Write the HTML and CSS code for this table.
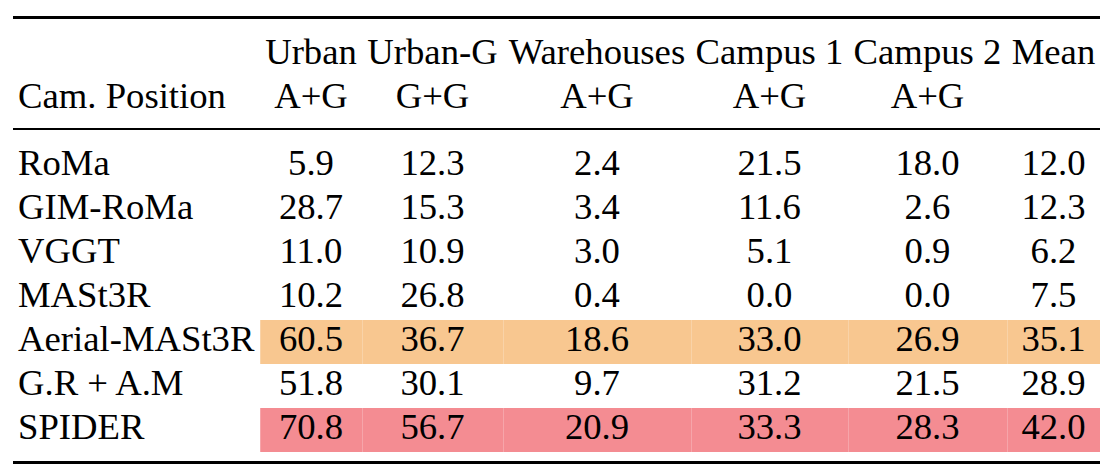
FILE: index.html
```html
<!DOCTYPE html>
<html lang="en">
<head>
<meta charset="utf-8">
<title>Results</title>
<link rel="stylesheet" href="styles.css">
</head>
<body>
<div class="frame">
  <table class="results">
    <colgroup>
      <col class="c0"><col class="c1"><col class="c2"><col class="c3"><col class="c4"><col class="c5"><col class="c6">
    </colgroup>
    <thead>
      <tr class="h1">
        <th class="name"></th><th>Urban</th><th>Urban-G</th><th>Warehouses</th><th>Campus 1</th><th>Campus 2</th><th>Mean</th>
      </tr>
      <tr class="h2">
        <th class="name">Cam. Position</th><th>A+G</th><th>G+G</th><th>A+G</th><th>A+G</th><th>A+G</th><th></th>
      </tr>
    </thead>
    <tbody>
      <tr class="first"><td class="name">RoMa</td><td>5.9</td><td>12.3</td><td>2.4</td><td>21.5</td><td>18.0</td><td>12.0</td></tr>
      <tr><td class="name">GIM-RoMa</td><td>28.7</td><td>15.3</td><td>3.4</td><td>11.6</td><td>2.6</td><td>12.3</td></tr>
      <tr><td class="name">VGGT</td><td>11.0</td><td>10.9</td><td>3.0</td><td>5.1</td><td>0.9</td><td>6.2</td></tr>
      <tr><td class="name">MASt3R</td><td>10.2</td><td>26.8</td><td>0.4</td><td>0.0</td><td>0.0</td><td>7.5</td></tr>
      <tr class="hl-orange"><td class="name">Aerial-MASt3R</td><td>60.5</td><td>36.7</td><td>18.6</td><td>33.0</td><td>26.9</td><td>35.1</td></tr>
      <tr><td class="name">G.R + A.M</td><td>51.8</td><td>30.1</td><td>9.7</td><td>31.2</td><td>21.5</td><td>28.9</td></tr>
      <tr class="hl-red"><td class="name">SPIDER</td><td>70.8</td><td>56.7</td><td>20.9</td><td>33.3</td><td>28.3</td><td>42.0</td></tr>
    </tbody>
  </table>
</div>
</body>
</html>
```
FILE: styles.css
```css
html, body {
  margin: 0;
  padding: 0;
  background: #ffffff;
}

.frame {
  margin: 16px 0 0 13px;
  width: 1087px;
  border-top: 3px solid #000;
  border-bottom: 3px solid #000;
  padding: 14px 0 9px 0;
}

.results {
  width: 1087px;
  table-layout: fixed;
  border-collapse: separate;
  border-spacing: 0;
  font-family: "Liberation Serif", "Times New Roman", serif;
  font-size: 36.7px;
  color: #000;
}

.c0 { width: 247px; }
.c1 { width: 102px; }
.c2 { width: 141px; }
.c3 { width: 188px; }
.c4 { width: 157px; }
.c5 { width: 159px; }
.c6 { width: 93px; }

.results th,
.results td {
  font-weight: normal;
  text-align: center;
  white-space: nowrap;
  line-height: 37.2px;
  padding: 0 0 6.8px 0;
  height: 37.2px;
  vertical-align: top;
}

.results .name {
  text-align: left;
  padding-left: 5px;
}

.results .h2 th {
  padding-bottom: 13.8px;
  border-bottom: 2px solid #000;
}

.results .first td {
  padding-top: 14px;
}

.hl-orange td:not(.name) {
  background: #f8c790;
  box-shadow: inset 1px 0 0 rgba(255, 255, 255, 0.22);
}

.hl-red td:not(.name) {
  background: #f48c92;
  box-shadow: inset 1px 0 0 rgba(255, 255, 255, 0.22);
}
```
